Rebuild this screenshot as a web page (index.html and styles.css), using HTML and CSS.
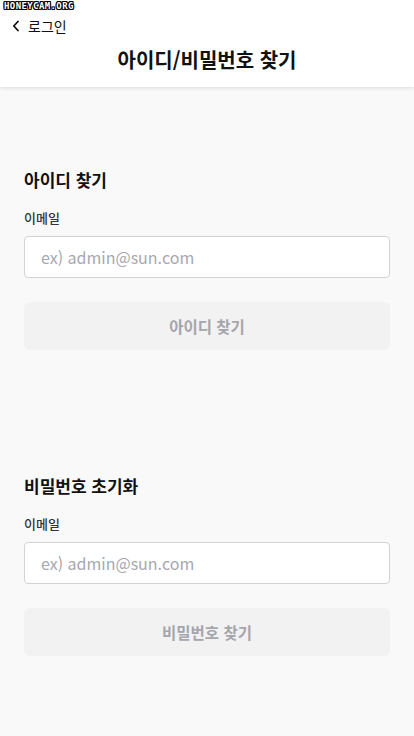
FILE: index.html
```html
<!DOCTYPE html>
<html lang="ko">
<head>
<meta charset="utf-8">
<link rel="stylesheet" href="styles.css">
</head>
<body>
<div class="watermark">HONEYCAM.ORG</div>
<header class="header">
  <a class="back" href="#">
    <svg class="back-icon" width="8" height="12" viewBox="0 0 8 12"><path d="M6 1.5 L1.8 6 L6 10.5" fill="none" stroke="#111" stroke-width="1.8" stroke-linecap="round" stroke-linejoin="round"/></svg>
    <span>로그인</span>
  </a>
  <h1 class="title">아이디/비밀번호 찾기</h1>
</header>
<main class="main">
  <section class="section">
    <h2 class="section-title">아이디 찾기</h2>
    <label class="label">이메일</label>
    <input class="input" type="text" placeholder="ex) admin@sun.com">
    <button class="btn">아이디 찾기</button>
  </section>
  <section class="section">
    <h2 class="section-title">비밀번호 초기화</h2>
    <label class="label">이메일</label>
    <input class="input" type="text" placeholder="ex) admin@sun.com">
    <button class="btn">비밀번호 찾기</button>
  </section>
</main>
</body>
</html>
```
FILE: styles.css
```css
* { box-sizing: border-box; }
html, body { margin: 0; padding: 0; }
body {
  font-family: "Noto Sans CJK KR", "Noto Sans", sans-serif;
  background: #f9f9f9;
  color: #111;
  width: 414px;
  min-height: 736px;
  position: relative;
}
.watermark {
  position: absolute;
  left: 4px;
  top: 1px;
  font-family: "DejaVu Sans Mono", monospace;
  font-weight: bold;
  font-size: 9px;
  letter-spacing: 0.4px;
  color: #fff;
  text-shadow: -1px 0 #000, 1px 0 #000, 0 -1px #000, 0 1px #000, 1px 1px #000, -1px -1px #000, 1px -1px #000, -1px 1px #000;
  z-index: 5;
}
.header {
  background: #fff;
  height: 87px;
  box-shadow: 0 1px 4px rgba(0,0,0,0.12);
  display: flex;
  flex-direction: column;
  position: relative;
  z-index: 1;
}
.back {
  display: flex;
  align-items: center;
  gap: 8px;
  padding: 16px 0 0 12px;
  height: 36px;
  text-decoration: none;
  color: #111;
  font-size: 14px;
}
.back span { line-height: 20px; }
.title {
  margin: 0;
  text-align: center;
  font-size: 20px;
  font-weight: 700;
  line-height: 28px;
  padding-top: 10px;
}
.main {
  padding: 81px 24px 40px;
  display: flex;
  flex-direction: column;
  gap: 124px;
}
.section {
  display: flex;
  flex-direction: column;
}
.section-title {
  margin: 0;
  font-size: 17px;
  font-weight: 700;
  line-height: 24px;
}
.label {
  margin-top: 16px;
  font-size: 13px;
  font-weight: 500;
  line-height: 20px;
  color: #333;
}
.input {
  margin-top: 8px;
  height: 42px;
  border: 1px solid #d3d3d6;
  border-radius: 4px;
  background: #fff;
  padding: 0 16px;
  font-family: inherit;
  font-size: 16px;
  color: #111;
  outline: none;
}
.input::placeholder { color: #a8a8ae; }
.btn {
  margin-top: 24px;
  height: 48px;
  border: none;
  border-radius: 6px;
  background: #f2f2f2;
  color: #a5a5ac;
  font-family: inherit;
  font-size: 15.5px;
  font-weight: 700;
}
```
